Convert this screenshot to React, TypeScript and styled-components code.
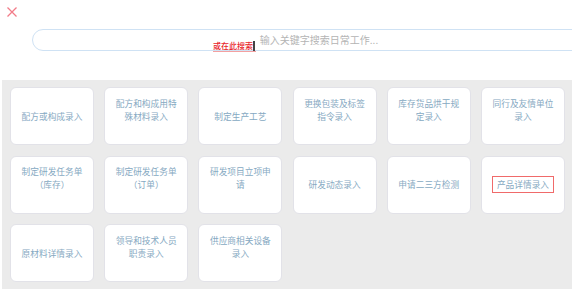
import React from 'react';
import styled, { createGlobalStyle } from 'styled-components';

const GlobalStyle = createGlobalStyle`
  html, body {
    margin: 0;
    padding: 0;
    background: #fff;
  }
  body {
    font-family: "Noto Sans CJK SC", "Liberation Sans", sans-serif;
  }
`;

const Page = styled.div`
  width: 572px;
  height: 289px;
  overflow: hidden;
  display: flex;
  flex-direction: column;
`;

const Header = styled.div`
  height: 80px;
  flex: none;
  padding: 6px 0 0 6px;
  box-sizing: border-box;
`;

const CloseButton = styled.button`
  display: block;
  width: 12px;
  height: 12px;
  padding: 0;
  border: none;
  background: none;
  cursor: pointer;
`;

const SearchWrap = styled.div`
  position: relative;
  margin: 11px 0 0 26px;
  width: 574px;
`;

const SearchInput = styled.input`
  display: block;
  width: 100%;
  height: 22px;
  box-sizing: border-box;
  border: 1.5px solid #cfe2f4;
  border-radius: 11px;
  outline: none;
  text-align: center;
  font-family: "Noto Sans CJK SC", sans-serif;
  font-size: 10px;
  color: #555;
  padding: 0 0 1px;

  &::placeholder {
    color: #b4b4b4;
  }
`;

const Hint = styled.span`
  position: absolute;
  left: 181px;
  top: 12px;
  font-size: 8px;
  line-height: 10px;
  font-weight: 500;
  color: #e8262c;
  border-bottom: 1px solid #f4a0a0;
  padding-right: 3px;
  white-space: nowrap;
`;

const Caret = styled.span`
  position: absolute;
  left: 221px;
  top: 12px;
  width: 2px;
  height: 10px;
  background: #444;
`;

const Panel = styled.div`
  flex: 1;
  margin-left: 2px;
  background: #ebebeb;
  padding: 7px 0 0 8px;
  display: grid;
  grid-template-columns: repeat(6, 84px);
  grid-auto-rows: 58px;
  column-gap: 10.2px;
  row-gap: 10.5px;
  align-content: start;
`;

const Card = styled.div`
  box-sizing: border-box;
  background: #fff;
  border: 1px solid #e2e2e8;
  border-radius: 6px;
  padding: 0 10px 21.5px;
  display: flex;
  flex-direction: column;
  justify-content: flex-end;
  align-items: center;
  text-align: center;
  font-size: 8.7px;
  line-height: 13px;
  color: #86a9c2;
  cursor: pointer;
`;

const Marked = styled.span`
  display: inline-block;
  white-space: nowrap;
  border: 1px solid #f06a6a;
  padding: 1px 4px;
  margin: -2px -6px;
`;

interface Entry {
  label: string;
  marked?: boolean;
}

const entries: Entry[] = [
  { label: '配方或构成录入' },
  { label: '配方和构成用特殊材料录入' },
  { label: '制定生产工艺' },
  { label: '更换包装及标签指令录入' },
  { label: '库存货品烘干规定录入' },
  { label: '同行及友情单位录入' },
  { label: '制定研发任务单（库存）' },
  { label: '制定研发任务单（订单）' },
  { label: '研发项目立项申请' },
  { label: '研发动态录入' },
  { label: '申请二三方检测' },
  { label: '产品详情录入', marked: true },
  { label: '原材料详情录入' },
  { label: '领导和技术人员职责录入' },
  { label: '供应商相关设备录入' },
];

const App: React.FC = () => {
  return (
    <Page>
      <GlobalStyle />
      <Header>
        <CloseButton aria-label="关闭">
          <svg width="12" height="12" viewBox="0 0 12 12">
            <path d="M1.5 1.5 L10.5 10.5 M10.5 1.5 L1.5 10.5" stroke="#f27b88" strokeWidth="1.3" fill="none" />
          </svg>
        </CloseButton>
        <SearchWrap>
          <SearchInput placeholder="输入关键字搜索日常工作..." />
          <Hint>或在此搜索</Hint>
          <Caret />
        </SearchWrap>
      </Header>
      <Panel>
        {entries.map((e) => (
          <Card key={e.label}>
            {e.marked ? <Marked>{e.label}</Marked> : <span>{e.label}</span>}
          </Card>
        ))}
      </Panel>
    </Page>
  );
};

export default App;
